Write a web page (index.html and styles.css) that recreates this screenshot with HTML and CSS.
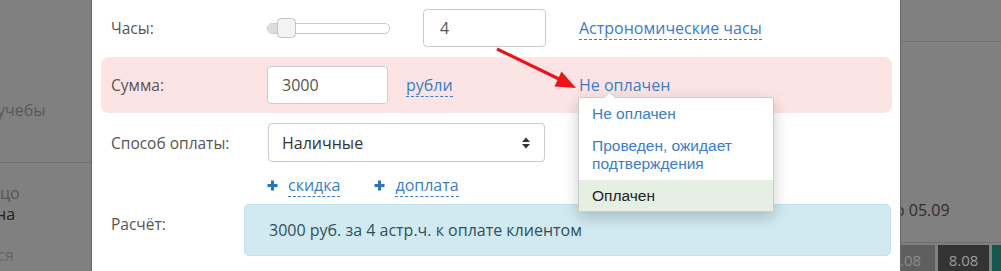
FILE: index.html
```html
<!DOCTYPE html>
<html lang="ru">
<head>
  <meta charset="UTF-8">
  <meta name="viewport" content="width=device-width, initial-scale=1.0">
  <title>Оплата занятия</title>
  <link rel="stylesheet" href="styles.css">
</head>
<body>
  <div class="screen">
    <!-- затемнённая страница слева -->
    <div class="side side-left">
      <div class="bg-text study">учебы</div>
      <div class="bg-rule rule-left"></div>
      <div class="bg-text face">цо</div>
      <div class="bg-text name">на</div>
      <div class="bg-text tail">ся</div>
    </div>

    <div class="modal">
      <div class="row">
        <div class="label">Часы:</div>
        <div class="controls">
          <div class="slider">
            <div class="slider-fill"></div>
            <div class="slider-handle"></div>
          </div>
          <input type="text" class="field field-hours" value="4">
        </div>
        <div class="aside"><a class="dashed">Астрономические часы</a></div>
      </div>

      <div class="row row-danger">
        <div class="label">Сумма:</div>
        <div class="controls controls-start">
          <input type="text" class="field field-sum" value="3000">
          <a class="dashed currency">рубли</a>
        </div>
        <div class="aside"><a class="status">Не оплачен</a></div>
      </div>

      <div class="row row-method">
        <div class="label">Способ оплаты:</div>
        <div class="select">
          <span>Наличные</span>
          <svg width="10" height="14" viewBox="0 0 10 14">
            <path d="M1 6 L5 1.5 L9 6 Z M1 8 L5 12.5 L9 8 Z" fill="#333"/>
          </svg>
        </div>
      </div>

      <div class="extras">
        <span class="plus"><svg width="11" height="11" viewBox="0 0 11 11"><path d="M5.5 0.5 V10.5 M0.5 5.5 H10.5" stroke="#2d73bb" stroke-width="3"/></svg></span>
        <a class="dashed">скидка</a>
        <span class="plus plus-gap"><svg width="11" height="11" viewBox="0 0 11 11"><path d="M5.5 0.5 V10.5 M0.5 5.5 H10.5" stroke="#2d73bb" stroke-width="3"/></svg></span>
        <a class="dashed">доплата</a>
      </div>

      <div class="row row-calc">
        <div class="label label-top">Расчёт:</div>
        <div class="calc-box">3000 руб. за 4 астр.ч. к оплате клиентом</div>
      </div>

      <!-- стрелка-подсказка -->
      <svg class="pointer" width="90" height="50" viewBox="0 0 90 50">
        <line x1="2" y1="5" x2="64" y2="35" stroke="#e8151b" stroke-width="3.2"/>
        <polygon points="81,44 59.5,42.5 66.5,27.5" fill="#e8151b"/>
      </svg>

      <!-- выпадающий список статуса -->
      <div class="status-menu">
        <div class="status-item">Не оплачен</div>
        <div class="status-item">Проведен, ожидает подтверждения</div>
        <div class="status-item selected">Оплачен</div>
      </div>
    </div>

    <!-- затемнённая страница справа -->
    <div class="side side-right">
      <div class="bg-rule rule-top"></div>
      <div class="bg-text due">о 05.09</div>
      <div class="bg-rule rule-bottom"></div>
      <div class="days">
        <div class="day day-light">.08</div>
        <div class="day day-dark">8.08</div>
        <div class="day day-teal"></div>
      </div>
    </div>
  </div>
</body>
</html>
```

FILE: styles.css
```css
body {
  margin: 0;
  padding: 0;
  font-family: 'Open Sans', 'DejaVu Sans', sans-serif;
  color: #555;
}
.screen {
  display: flex;
  width: 1001px;
  height: 271px;
  overflow: hidden;
  background: #808080;
}
.side {
  overflow: hidden;
  font-size: 16px;
  line-height: 21px;
}
.side-left {
  width: 91px;
  flex: none;
}
.side-right {
  flex: 1;
  min-width: 0;
}
.bg-text {
  white-space: nowrap;
}
.bg-rule {
  height: 1px;
  background: #707070;
}
.study {
  margin-top: 99px;
  margin-left: -3px;
  line-height: 22px;
  color: #5a5a5a;
}
.rule-left {
  margin-top: 41px;
}
.face {
  margin-top: 20px;
  color: #575757;
}
.name {
  margin-left: -4px;
  color: #222;
}
.tail {
  margin-top: 20px;
  margin-left: -3px;
  color: #666;
}
.rule-top {
  margin-top: 41px;
}
.due {
  margin-top: 157px;
  margin-left: -6px;
  line-height: 22px;
  color: #2e2e2e;
}
.rule-bottom {
  margin-top: 21px;
}
.days {
  display: flex;
  gap: 3px;
  margin-top: 2px;
  margin-left: -1px;
}
.day {
  flex: none;
  height: 30px;
  display: flex;
  align-items: center;
  justify-content: center;
  font-size: 15px;
}
.day-light {
  width: 35px;
  background: #5f5f5f;
  color: #8c8c8c;
  justify-content: flex-start;
}
.day-dark {
  width: 51px;
  background: #333;
  color: #9c9c9c;
}
.day-teal {
  width: 12px;
  background: #15574c;
}

/* модальное окно */
.modal {
  position: relative;
  flex: none;
  width: 808px;
  box-sizing: content-box;
  background: #fff;
  border-left: 1px solid #666;
  border-right: 1px solid #666;
}
.row {
  display: grid;
  grid-template-columns: 156px 279px auto;
  align-items: center;
  margin: 0 8px 0 9px;
  padding: 0 10px;
}
.row:first-child {
  margin-top: 9px;
}
.aside {
  margin-left: 33px;
}
.label {
  font-size: 15.5px;
  color: #555;
}
.controls {
  display: flex;
  align-items: center;
  justify-content: space-between;
}
.controls-start {
  justify-content: flex-start;
}
.slider {
  display: flex;
  align-items: center;
  width: 121px;
  height: 9px;
  border: 1px solid #ccc;
  border-radius: 5px;
  background: #fff;
}
.slider-fill {
  width: 9px;
  height: 100%;
  background: #ddd;
  border-radius: 5px 0 0 5px;
}
.slider-handle {
  width: 17px;
  height: 18px;
  background: #f3f3f3;
  border: 1px solid #c5c5c5;
  border-radius: 4px;
}
.field {
  height: 38px;
  box-sizing: border-box;
  border: 1px solid #ccc;
  border-radius: 4px;
  padding: 0 15px;
  font-family: inherit;
  font-size: 16px;
  color: #555;
  background: #fff;
}
.field-hours {
  width: 123px;
  padding-left: 16px;
}
.field-sum {
  width: 121px;
  padding-left: 14px;
}
a {
  cursor: pointer;
}
.dashed {
  color: #3b7dc4;
  font-size: 16px;
  line-height: 22px;
  text-decoration: none;
  border-bottom: 1px dashed #3b7dc4;
}
.currency {
  margin-left: 18px;
}
.status {
  color: #3b7dc4;
  font-size: 16px;
  text-decoration: none;
}
.row-danger {
  margin-top: 10px;
  padding: 9px 10px;
  background: #fde4e4;
  border-radius: 8px;
}
.row-method {
  margin-top: 10px;
}
.select {
  display: flex;
  align-items: center;
  justify-content: space-between;
  width: 277px;
  height: 39px;
  box-sizing: border-box;
  margin-left: 1px;
  padding: 0 13px 0 13px;
  border: 1px solid #ccc;
  border-radius: 4px;
  font-size: 16px;
  color: #333;
}
.extras {
  display: flex;
  align-items: center;
  margin-top: 12px;
  padding-left: 175px;
  height: 22px;
}
.plus {
  display: flex;
  margin-right: 10px;
}
.plus-gap {
  margin-left: 34px;
}
.row-calc {
  grid-template-columns: 133px 1fr;
  align-items: start;
  margin-top: 8px;
  padding-right: 1px;
}
.label-top {
  padding-top: 9px;
}
.calc-box {
  height: 52px;
  box-sizing: border-box;
  display: flex;
  align-items: center;
  padding: 0 24px;
  background: #d1e9f0;
  border: 1px solid #c2e3eb;
  border-radius: 5px;
  font-size: 16px;
  color: #30505c;
}

/* стрелка и выпадающее меню поверх содержимого */
.pointer {
  position: absolute;
  left: 403px;
  top: 44px;
}
.status-menu {
  position: absolute;
  left: 486px;
  top: 97px;
  width: 194px;
  background: #fff;
  border: 1px solid #ccc;
  border-radius: 3px;
  box-shadow: 0 5px 15px rgba(0,0,0,0.2);
  font-family: 'Liberation Sans', Arial, sans-serif;
  font-size: 15.5px;
  line-height: 18px;
}
.status-menu::before {
  content: '';
  position: absolute;
  left: 26px;
  top: -5px;
  width: 8px;
  height: 8px;
  background: #fff;
  border-top: 1px solid #ccc;
  border-left: 1px solid #ccc;
  transform: rotate(45deg);
}
.status-item {
  position: relative;
  padding: 7px 13px;
  color: #3b7dc4;
}
.status-item.selected {
  background: #e6efe4;
  color: #222;
  padding-bottom: 6px;
}
```
